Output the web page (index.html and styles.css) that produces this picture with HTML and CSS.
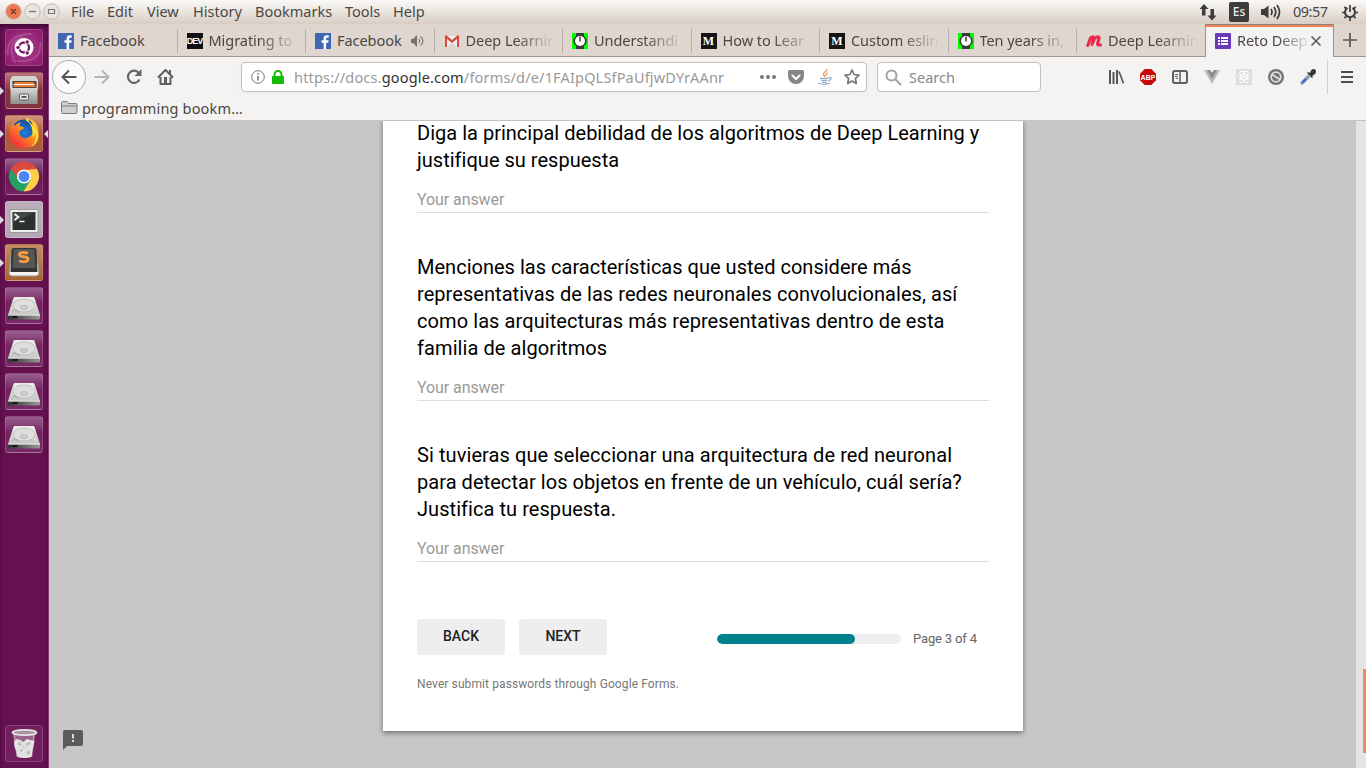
FILE: index.html
```html
<!DOCTYPE html>
<html lang="es">
<head>
<meta charset="utf-8">
<title>Reto Deep Learning</title>
<link rel="stylesheet" href="styles.css">
</head>
<body>
<svg class="defs" width="0" height="0">
  <defs>
    <linearGradient id="metal" x1="0" y1="0" x2="0" y2="1"><stop offset="0" stop-color="#ededec"/><stop offset="1" stop-color="#c6c6c5"/></linearGradient>
    <linearGradient id="cabinet" x1="0" y1="0" x2="0" y2="1"><stop offset="0" stop-color="#d9d9d7"/><stop offset="1" stop-color="#8e8e8c"/></linearGradient>
    <linearGradient id="under" x1="0" y1="0" x2="1" y2="0"><stop offset="0" stop-color="#333"/><stop offset="1" stop-color="#999"/></linearGradient>
    <linearGradient id="flame" x1="1" y1="0" x2="0.2" y2="1"><stop offset="0" stop-color="#ffe53a"/><stop offset=".45" stop-color="#ff9a1f"/><stop offset="1" stop-color="#f5233f"/></linearGradient>
    <radialGradient id="globe"><stop offset="0" stop-color="#1d7fd8"/><stop offset="1" stop-color="#164b9c"/></radialGradient>
    <symbol id="fb" viewBox="0 0 16 16"><path fill="#4267b2" d="M0 0h16v16H0z"/><path fill="#fff" d="M8.6 16V9.8H6.5V7.3h2.1V5.500c0-2.1 1.200-3.200 3.200-3.200.9 0 1.700.1 1.900.1v2.300h-1.300c-1 0-1.300.5-1.300 1.200v1.400h2.500l-.3 2.500h-2.200V16z"/></symbol>
    <symbol id="watch" viewBox="0 0 16 16"><path fill="#0f0" d="M0 0h16v16H0z"/><path fill="#3b3b3b" d="M4 0h8v3l2.500 3v4L12 13v3H4v-3L1.500 10V6L4 3z"/><circle cx="8" cy="8" r="5" fill="#fff"/><path stroke="#222" stroke-width="1.300" d="M8 3.500V8.500"/></symbol>
    <symbol id="disk" viewBox="0 0 37 37"><path fill="url(#metal)" d="M8 11q.3-1 1.500-1h18q1.200 0 1.500 1l5.500 17h-32z"/><path fill="url(#under)" d="M2.500 28h32v3q0 1.500-1.500 1.500H4q-1.500 0-1.500-1.500z"/><path stroke="#fff" stroke-width=".8" d="M2.500 28.200h32"/><ellipse cx="18.500" cy="18.500" rx="11" ry="6.500" fill="#dededd" stroke="#bababa" stroke-width=".8"/><ellipse cx="18.500" cy="20.500" rx="3.500" ry="1.800" fill="#d4d4d3" stroke="#a0a0a0" stroke-width=".7"/><path fill="none" stroke="#a8a8a8" d="M7 25.500l1.500-3 5 3"/><path fill="#161616" d="M7 29h5v2H7z"/></symbol>
  </defs>
</svg>
<div class="desktop">
  <header class="panel">
    <div class="wm">
      <svg width="60" height="24" viewBox="0 0 60 24" fill="none"><circle cx="13.500" cy="11.500" r="7.700" fill="#ef7650" stroke="#c9b2a4"/><path stroke="#6d3824" stroke-width="1.200" d="M11 9l5 5m0-5l-5 5"/><circle cx="32.500" cy="11.500" r="7.700" fill="#e9e4df" stroke="#c2bab3"/><path stroke="#77736d" stroke-width="1.300" d="M29 11.500h7"/><circle cx="51.500" cy="11.500" r="7.700" fill="#e9e4df" stroke="#c2bab3"/><path stroke="#77736d" stroke-width="1.200" d="M48.500 9.500h6v4h-6z"/></svg>
    </div>
    <nav class="menus">
      <span class="m-file">File</span><span class="m-edit">Edit</span><span class="m-view">View</span><span class="m-history">History</span><span class="m-bookmarks">Bookmarks</span><span class="m-tools">Tools</span><span>Help</span>
    </nav>
    <div class="tray">
      <svg width="18" height="18" viewBox="0 0 18 18" fill="#3c3c3c"><path d="M5 1L.5 6H3v6.500h3.500V6H9.500zM13 17.500l4.500-5H15V6h-3.500v6.500H8.500z"/></svg>
      <span class="lang">Es</span>
      <svg class="vol" width="20" height="18" viewBox="0 0 20 18" fill="none" stroke="#3c3c3c" stroke-width="1.700"><path fill="#3c3c3c" stroke="none" d="M0 6h3l4.500-3.500v13L3 12H0z"/><path d="M10 6q2 3 0 6M13 4q3.500 5 0 10M16 2q5 7 0 14"/></svg>
      <span class="clock">09:57</span>
      <svg width="16" height="17" viewBox="0 0 16 17" fill="none" stroke="#3c3c3c"><path stroke-width="2" d="M5.500 3.900a5 5 0 1 0 5 0"/><path stroke-width="1.700" d="M8 1v7M0 8.500h3m10 0h3M2.400 14.200l2-2m9.200 2l-2-2M8 13.500V17M2.400 2.800l2 2m9.200-2l-2 2"/></svg>
    </div>
  </header>
  <div class="workspace">
    <aside class="launcher">
      <div class="tile ubuntu"><svg viewBox="0 0 37 37" fill="none"><path stroke="#b969a3" stroke-width="2" opacity=".5" d="M2 26Q1 4 27 5M10 34Q-1 15 17 8M35 13q1 21-23 19"/><circle cx="18.500" cy="18.500" r="9.500" fill="#fff"/><circle cx="18.500" cy="18.500" r="5" stroke="#76155b" stroke-width="2.300"/><g fill="#76155b" stroke="#fff"><circle cx="12.500" cy="18.500" r="2.200"/><circle cx="21.700" cy="13" r="2.200"/><circle cx="21.700" cy="24" r="2.200"/></g></svg></div>
      <div class="tile files running"><svg viewBox="0 0 37 37"><path fill="#d4d4d2" d="M7 4h23l2.500 4v9h-28V8z"/><path fill="#4b4542" d="M7 9h24v8H7z"/><path fill="#ef7b32" d="M9 10h19l2 5H8z"/><path stroke="#fff" d="M8 12.500h21"/><path fill="url(#cabinet)" d="M5 16h27v16H5z"/><rect x="14" y="22" width="9" height="6" rx="1" fill="#eee" stroke="#555"/><path fill="#555" d="M16 24h5v2h-5z"/></svg></div>
      <div class="tile firefox running focused"><svg viewBox="0 0 37 37"><circle cx="19" cy="18" r="13.500" fill="url(#globe)"/><path fill="url(#flame)" d="M5 12l3-5 1 4q3-3 6-4l-1 4q2 0 5 2l-5 3q-1 5 4 7 5 1 9-4 3-8-4-16 10 4 10 15c1 8-6 15-14 15C7 33 2 24 5 12z"/><path fill="#ffdd38" d="M22 2q1 5 5 8 8 7 5 16-3 5-7 6 7-5 5-14l-3 5Q28 9 20 5z"/></svg></div>
      <div class="tile chrome"><svg viewBox="0 0 37 37"><path fill="#db4c3e" d="M18.500 18.500L5.500 11A15 15 0 0 1 31.500 11z"/><path fill="#26a164" d="M18.500 18.500L5.500 11A15 15 0 0 0 18.500 33.500z"/><path fill="#ffcf47" d="M18.500 18.500V33.500A15 15 0 0 0 31.500 11H18.500z"/><path fill="#26a164" d="M5.500 11l6.600 11.500L18 33.500 25 22z"/><path fill="#db4c3e" d="M5.500 11h26L19 12l-7 8z"/><circle cx="18.500" cy="18.500" r="7" fill="#fff"/><circle cx="18.500" cy="18.500" r="5.500" fill="#4b87f0"/></svg></div>
      <div class="tile terminal running"><svg viewBox="0 0 37 37"><path fill="#eee" stroke="#999" d="M4.500 8.500h28v23h-28z"/><path fill="#2c302f" d="M7 11h23v18H7z"/><path fill="#505653" d="M7 11h23L7 22z" opacity=".6"/><path fill="none" stroke="#fff" stroke-width="1.600" d="M9 13l4 3-4 3m5 1.500h5"/></svg></div>
      <div class="tile sublime running"><svg viewBox="0 0 37 37"><path fill="#f4f3f1" stroke="#999" d="M6 8h25l2.500 21q0 3-3 3H6.500q-3 0-3-3z"/><path fill="#333" d="M8 4h21q2 0 2 2l1 22H5L6 6q0-2 2-2z"/><path fill="#565656" d="M8 5h21l1 19H7z"/><path fill="none" stroke="#ff9c3f" stroke-width="2.800" d="M22.500 9q-8.500-1.500-8.500 1.500c0 3.500 8.500 1 8.500 4.500 0 3.500-5.500 3-9 2"/></svg></div>
      <div class="tile disk"><svg><use href="#disk"/></svg></div>
      <div class="tile disk"><svg><use href="#disk"/></svg></div>
      <div class="tile disk"><svg><use href="#disk"/></svg></div>
      <div class="tile disk"><svg><use href="#disk"/></svg></div>
      <div class="tile trash"><svg viewBox="0 0 37 37"><path fill="#fff" opacity=".3" d="M7 7h23l-3 25H11z"/><path fill="#e2e2e1" d="M8.500 17l2.500-3 4 1 3 2 3-3 4 1 4 1-1 5-1 4-1 7q-7 2-14 0l-1-6-2-4z"/><path fill="#bcbcba" d="M12 18l3-1 1 3-2 1zM20 19l4-2 1 2-4 2zM14 25l4-1-2 3zM21 27l4-2-1 4-2 1zM17 21l3 1-2 1z"/><path fill="none" stroke="#eee" stroke-width=".8" opacity=".6" d="M9 9l2.500 22q7.500 3 14 0L28.500 9"/><ellipse cx="19" cy="7.500" rx="12" ry="2.700" fill="#a595a2" stroke="#e2e2e1" stroke-width="1.800"/></svg></div>
    </aside>
    <main class="browser">
      <div class="tabs">
        <div class="tab"><svg class="fav"><use href="#fb"/></svg><span class="label">Facebook</span></div>
        <div class="tab"><span class="fav dev">DEV</span><span class="label fade">Migrating to</span></div>
        <div class="tab"><svg class="fav"><use href="#fb"/></svg><span class="label short">Facebook</span><svg class="snd" width="14" height="12" viewBox="0 0 14 12" fill="none" stroke="#77716d"><path fill="#77716d" stroke="none" d="M0 4h2l4-4v12L2 8H0z"/><path stroke-width="1.200" d="M8 4q1.500 2 0 4M9.500 1.500q5 4.500 0 9"/></svg></div>
        <div class="tab"><svg class="fav" viewBox="0 0 16 16"><path fill="#f1efed" d="M1 3h14v11H1z"/><path fill="#d9d6d4" d="M3 14l5-5 5 5z"/><path fill="#d74b3e" d="M1 3q0-1 1-1l6 5 6-5q1 0 1 1v11h-2V6L8 10 3 6v8H1z"/></svg><span class="label fade">Deep Learnin</span></div>
        <div class="tab"><svg class="fav"><use href="#watch"/></svg><span class="label fade">Understandi</span></div>
        <div class="tab"><span class="fav medium">M</span><span class="label fade">How to Lear</span></div>
        <div class="tab"><span class="fav medium">M</span><span class="label fade">Custom eslin</span></div>
        <div class="tab"><svg class="fav"><use href="#watch"/></svg><span class="label fade">Ten years in,</span></div>
        <div class="tab"><svg class="fav" viewBox="0 0 16 16"><path fill="none" stroke="#f0274b" stroke-width="3" stroke-linecap="round" stroke-linejoin="round" d="M1.800 12.500L4.500 5Q7.500 2.500 7.500 5L6 11.500 8.500 5.500q4.500-3.500 4.500 0l-1.500 5.500q0 1.500 3 1"/></svg><span class="label fade">Deep Learnin</span></div>
        <div class="tab active"><svg class="fav" viewBox="0 0 16 16"><rect width="16" height="16" rx="1" fill="#673ab7"/><path fill="#fff" d="M3 4h2v2H3zm3 0h7v2H6zM3 7h2v2H3zm3 0h7v2H6zm-3 3h2v2H3zm3 0h7v2H6z"/></svg><span class="label fade">Reto Deep</span><svg class="close" width="10" height="10" viewBox="0 0 10 10"><path stroke="#555" stroke-width="1.500" d="M.5.5l9 9m0-9l-9 9"/></svg></div>
        <div class="newtab"><svg width="14" height="14" viewBox="0 0 14 14"><path stroke="#5b5753" stroke-width="1.700" d="M7 0v14M0 7h14"/></svg></div>
      </div>
      <div class="toolbar">
        <div class="back"><svg width="16" height="16" viewBox="0 0 16 16" fill="none" stroke="#555" stroke-width="2"><path d="M15.500 8H2M8 1.500L1.500 8 8 14.500"/></svg></div>
        <svg class="forward" width="16" height="16" viewBox="0 0 16 16" fill="none" stroke="#b5b3b1" stroke-width="2"><path d="M.5 8H14M8 1.500L14.500 8 8 14.500"/></svg>
        <svg class="reload" width="16" height="16" viewBox="0 0 16 16" fill="none"><path stroke="#666" stroke-width="2.200" d="M12.800 4A6.100 6.100 0 1 0 13.500 10.500"/><path fill="#666" d="M15.500 0v7H8.500z"/></svg>
        <svg class="home" width="17" height="16" viewBox="0 0 17 16" fill="none"><path stroke="#5f5f5f" stroke-width="2" stroke-linejoin="round" d="M1 8.500L8.500 1 16 8.500M3.500 8v7h10V8"/><path fill="#5f5f5f" d="M7 8h3v7H7zM12 1h2v4h-2z"/></svg>
        <div class="urlbar">
          <svg width="14" height="14" viewBox="0 0 14 14" fill="none"><circle cx="7" cy="7" r="6.300" stroke="#777"/><path fill="#777" d="M6.200 6h1.600v4.500H6.200zM6.200 3.200h1.600v1.600H6.200z"/></svg>
          <svg class="lock" width="12" height="14" viewBox="0 0 12 14"><path fill="#12bc00" d="M0 6h1.500V4.500a4.500 4.500 0 0 1 9 0V6H12v7q0 1-1 1H1q-1 0-1-1zm3.500 0h5V4.500a2.500 2.500 0 0 0-5 0z"/></svg>
          <span class="url">https://docs.<b>google.com</b>/forms/d/e/1FAIpQLSfPaUfjwDYrAAnr</span>
          <svg class="dots" width="16" height="4" viewBox="0 0 16 4" fill="#777"><circle cx="2" cy="2" r="2"/><circle cx="8" cy="2" r="2"/><circle cx="14" cy="2" r="2"/></svg>
          <svg class="pocket" width="16" height="15" viewBox="0 0 16 15"><path fill="#858585" d="M1.500 0h13Q16 0 16 1.500V6A8 8 0 0 1 0 6V1.500Q0 0 1.500 0z"/><path fill="none" stroke="#fff" stroke-width="2" stroke-linecap="round" d="M4.500 5.500L8 9l3.500-3.500"/></svg>
          <svg class="java" width="14" height="16" viewBox="0 0 14 16" fill="none"><path stroke="#ee965b" stroke-width="1.300" d="M9 0Q9 2 7 3q-3 2 0 5M10 4Q7 5 8 7"/><path stroke="#7599b8" stroke-width="1.100" opacity=".85" d="M2 9q4 1 8 0M3 11q3 1 6 0M4 13q3 1 5 0M0 14q6 2.500 12 0M10 9q4-1 3 1-1 1.500-3 2"/></svg>
          <svg width="16" height="16" viewBox="0 0 16 16"><path fill="none" stroke="#777" stroke-width="1.700" stroke-linejoin="round" d="M8 1l2.100 4.500 4.900.600-3.600 3.400.9 5L8 12l-4.300 2.500.900-5L1 6.100l4.900-.6z"/></svg>
        </div>
        <div class="search"><svg width="17" height="17" viewBox="0 0 17 17" fill="none" stroke="#a2a2a2" stroke-width="2"><circle cx="6.500" cy="6.500" r="5"/><path d="M10 10l6 6"/></svg><span>Search</span></div>
        <div class="tools">
          <svg viewBox="0 0 16 16"><path stroke="#555" stroke-width="2" d="M2 1v14M5.500 3v12M9 1v14"/><path stroke="#555" stroke-width="1.700" d="M11 2.500l4.500 12"/></svg>
          <svg viewBox="0 0 16 16"><path fill="#c80909" d="M4.700 0h6.600L16 4.700v6.600L11.300 16H4.700L0 11.300V4.700z"/><text class="abp" x="8" y="10.600" text-anchor="middle">ABP</text></svg>
          <svg viewBox="0 0 16 16" fill="none" stroke="#5f5f5f"><rect x="1" y="2" width="14" height="12" rx="2" stroke-width="2"/><path stroke-width="1.500" d="M8 2v12"/><path d="M3 5.500h3M3 7.500h3M4 9.500h2"/></svg>
          <svg viewBox="0 0 16 16"><path fill="#b9b9b9" d="M0 1h6l2 3 2-3h6L8 15z"/><path fill="#8b8b8b" d="M3 1h3l2 3 2-3h3L8 10z"/></svg>
          <svg viewBox="0 0 16 16" fill="none"><path fill="#dcdcdb" d="M0 0h16v16H0z"/><g stroke="#fff"><ellipse cx="8" cy="8" rx="6.500" ry="2.600"/><ellipse cx="8" cy="8" rx="6.500" ry="2.600" transform="rotate(60 8 8)"/><ellipse cx="8" cy="8" rx="6.500" ry="2.600" transform="rotate(120 8 8)"/></g><circle cx="8" cy="8" r="1.300" fill="#fff"/></svg>
          <svg viewBox="0 0 16 16"><circle cx="8" cy="8" r="8" fill="#737373"/><circle cx="8" cy="8" r="4.800" fill="none" stroke="#dedede" stroke-width="1.800"/><path stroke="#dedede" stroke-width="1.800" d="M4 5.500l8 5"/></svg>
          <svg viewBox="0 0 16 16"><path stroke="#8c9dad" stroke-width="3.500" d="M1 15l8-8"/><path stroke="#2e65ef" stroke-width="2" d="M2.500 13.500L6 10"/><path fill="#353535" d="M7 4l1-1 2 1q1-4 3.500-4Q16 0 16 2.500T12 7l1 1-1 1z"/></svg>
        </div>
        <div class="burger"><svg width="12" height="12" viewBox="0 0 12 12"><path stroke="#4c4c4c" stroke-width="1.800" d="M0 1h12M0 6h12M0 11h12"/></svg></div>
      </div>
      <div class="bookmarks"><svg width="17" height="15" viewBox="0 0 17 15"><path fill="#d0cfce" stroke="#7e7c7a" d="M.5 2.500q0-1 1-1H6l1.500 2h7.500q1 0 1 1v8q0 1-1 1H1.500q-1 0-1-1zM.5 6h15.500"/></svg><span>programming bookm…</span></div>
      <div class="page">
        <div class="feedback"><svg width="20" height="20" viewBox="0 0 20 20"><path fill="#5c5c5c" d="M2 0h16q2 0 2 2v12q0 2-2 2H4l-4 4V2Q0 0 2 0z"/><path fill="#ddd" d="M9 4h2v4.500H9zM9 10h2v2H9z"/></svg></div>
        <form class="card">
          <div class="question">Diga la principal debilidad de los algoritmos de Deep Learning y<br>justifique su respuesta</div>
          <div class="answer">Your answer</div>
          <div class="question"><span>Menciones las características que usted considere más</span><br><span class="wide">representativas de las redes neuronales convolucionales, así</span><br><span class="wider">como las arquitecturas más representativas dentro de esta</span><br><span class="wider">familia de algoritmos</span></div>
          <div class="answer">Your answer</div>
          <div class="question"><span class="wider">Si tuvieras que seleccionar una arquitectura de red neuronal</span><br><span class="wide">para detectar los objetos en frente de un vehículo, cuál sería?</span><br><span class="wide">Justifica tu respuesta.</span></div>
          <div class="answer">Your answer</div>
          <div class="actions"><span class="btn">BACK</span><span class="btn">NEXT</span><div class="progress"><div class="bar" style="width:75%"></div></div><span class="count">Page 3 of 4</span></div>
          <div class="note">Never submit passwords through Google Forms.</div>
        </form>
        <div class="scrollbar"><div class="thumb"></div></div>
      </div>
    </main>
  </div>
</div>
</body>
</html>
```
FILE: styles.css
```css
* { box-sizing: border-box; }
body { margin: 0; overflow: hidden; font: 14.500px/20px "Noto Sans", "Open Sans", sans-serif; color: #4a4745; }
svg { display: block; flex: none; }
.defs { position: absolute; }
.desktop { width: 1366px; height: 768px; display: flex; flex-direction: column; }
.panel { height: 24px; flex: none; display: flex; align-items: center; background: linear-gradient(#faf9f8, #f0ece8 30%, #d8cdc3); white-space: nowrap; }
.wm { width: 71px; }
.menus { display: flex; flex: 1; padding-bottom: 2px; }
.m-file { width: 36px; }
.m-edit { width: 40px; }
.m-view { width: 46px; }
.m-history { width: 62px; }
.m-bookmarks { width: 90px; }
.m-tools { width: 48px; }
.tray { display: flex; align-items: center; padding-right: 8px; }
.lang { width: 20px; height: 20px; margin: 0 12px 0 12px; border-radius: 2px; background: #3c3c3c; color: #f0ece8; font-size: 12px; font-weight: 500; text-align: center; }
.clock { width: 37px; margin: 0 12px; padding-bottom: 2px; letter-spacing: -.5px; }
.workspace { flex: 1; display: flex; min-height: 0; }
.launcher { width: 49px; padding: 5px 0 6px 5px; background: #65104f; border-right: 1px solid #8a3c79; display: flex; flex-direction: column; gap: 6px; box-shadow: inset 0 3px 3px #470a38; }
.tile { position: relative; width: 38px; height: 37px; flex: none; border: 1px solid #ffffff28; border-radius: 3px; background: linear-gradient(#98608d, #75225f 45%, #762a66); }
.tile svg { width: 38px; height: 37px; margin: -1px; }
.ubuntu { background: radial-gradient(circle, #a9428b, #8c176d); }
.files { background: linear-gradient(#bb7777, #88343e 50%, #82323f); }
.firefox { background: linear-gradient(#ce957c, #b45b32 50%, #ac5d3d); }
.chrome { background: linear-gradient(#956189, #6b1855 50%, #742060); }
.terminal { background: linear-gradient(#bcb0bd, #b6a8b6); }
.sublime { background: linear-gradient(#c28b65, #a8652e); }
.trash { margin-top: auto; background: #711f5d; }
.running::before { content: ""; position: absolute; left: -6px; top: 14px; border: 4px solid transparent; border-left: 4px solid #ddd; border-right: 0; }
.focused::after { content: ""; position: absolute; right: -6px; top: 14px; border: 4px solid transparent; border-right: 4px solid #ddd; border-left: 0; }
.browser { flex: 1; min-width: 0; display: flex; flex-direction: column; background: #f4f3f1; }
.tabs { height: 33px; flex: none; display: flex; background: #dfd6cf; border-bottom: 1px solid #9c948e; }
.tab { position: relative; width: 128.500px; flex: none; display: flex; align-items: center; padding: 1px 0 0 9px; }
.tab::after { content: ""; position: absolute; right: 0; top: 5px; width: 1px; height: 24px; background: #b5ada7; }
.fav { width: 16px; height: 16px; flex: none; margin-right: 6px; overflow: hidden; }
.label { width: 90px; padding-bottom: 2px; white-space: nowrap; letter-spacing: -.05px; }
.short { width: 74px; }
.fade { -webkit-mask-image: linear-gradient(90deg, #000 55%, transparent 100%); mask-image: linear-gradient(90deg, #000 55%, transparent 100%); }
.dev { background: #111; color: #fff; font: bold 9px/16px "Liberation Sans", sans-serif; letter-spacing: -1px; text-align: center; }
.medium { background: #151515; color: #fff; font: bold 12px/16px "Liberation Serif", serif; text-align: center; }
.active { width: 129px; margin-left: -.5px; background: #f4f3f1; border: 1px solid #9c948e; border-top-color: #8f8078; border-bottom: 0; height: 33px; box-shadow: inset 0 2px #f08355; padding-top: 0; }
.active::after, .tab:nth-child(9)::after { display: none; }
.active .label { width: 74px; }
.newtab { padding: 9px 0 0 9px; }
.toolbar { height: 40px; flex: none; display: flex; align-items: center; padding-left: 3px; }
.back { width: 34px; height: 34px; border: 1px solid #aaa8a6; border-radius: 50%; background: #fbfbfb; display: flex; align-items: center; justify-content: center; }
.forward { margin-left: 8px; }
.reload { margin-left: 16px; }
.home { margin-left: 15px; }
.urlbar { width: 626px; height: 30px; margin-left: 67px; padding: 0 6px 0 9px; border: 1px solid #c2c0be; border-radius: 4px; background: #fff; box-shadow: 0 1px 3px #0000000a; display: flex; align-items: center; }
.lock { margin-left: 7px; }
.url { width: 432px; margin-left: 10px; white-space: nowrap; color: #999; letter-spacing: .17px; }
.url b { font-weight: 400; color: #333; }
.dots { margin-left: 35px; }
.pocket { margin-left: 12px; }
.java { margin: 0 12px 0 14px; }
.search { width: 164px; height: 30px; margin-left: 10px; padding-left: 7px; border: 1px solid #c2c0be; border-radius: 4px; background: #fff; display: flex; align-items: center; gap: 7px; color: #888; }
.tools { display: flex; gap: 16px; margin-left: 67px; }
.tools svg { width: 16px; height: 16px; }
.abp { fill: #fff; font: bold 7px "Liberation Sans", sans-serif; }
.burger { height: 34px; margin-left: 11px; padding: 11px 0 0 13px; border-left: 1px solid #d4d2d0; }
.bookmarks { height: 24px; flex: none; display: flex; align-items: center; gap: 4px; padding: 0 0 2px 12px; border-bottom: 1px solid #c5c3c1; letter-spacing: .16px; }
.page { position: relative; flex: 1; display: flex; min-height: 0; overflow: hidden; background: #c7c7c5; font-family: Roboto, sans-serif; }
.card { width: 640px; height: 612px; margin: -2px 0 0 334px; padding: 1px 34px 0; background: #fff; box-shadow: 0 2px 5px #00000070; }
.question { font-size: 20px; line-height: 27px; color: #000; white-space: nowrap; letter-spacing: .015px; }
.wide { letter-spacing: .055px; }
.wider { letter-spacing: .085px; }
.answer { width: 572px; height: 39px; padding-top: 16px; margin-bottom: 41px; border-bottom: 1px solid #dcdcdc; font-size: 16px; line-height: 20px; letter-spacing: -.08px; color: #9a9a9a; }
.actions { display: flex; align-items: center; margin-top: 57px; height: 36px; }
.btn { width: 88px; height: 36px; margin-right: 14px; border-radius: 3px; background: #eee; color: #222; font-weight: 500; font-size: 14px; line-height: 35px; text-align: center; }
.progress { width: 184px; height: 10px; margin: 4px 12px 0 96px; border-radius: 5px; background: #eee; overflow: hidden; }
.bar { height: 10px; border-radius: 5px; background: #00838f; }
.count { margin-top: 3px; font-size: 13px; letter-spacing: -.15px; color: #666; }
.note { margin-top: 19px; font-size: 12px; letter-spacing: .1px; color: #777; }
.feedback { position: absolute; left: 14px; bottom: 18px; }
.scrollbar { width: 10px; margin-left: auto; padding: 548px 0 0 7px; background: #e5e5e5; }
.thumb { width: 3px; height: 84px; background: #f08a60; }
```
